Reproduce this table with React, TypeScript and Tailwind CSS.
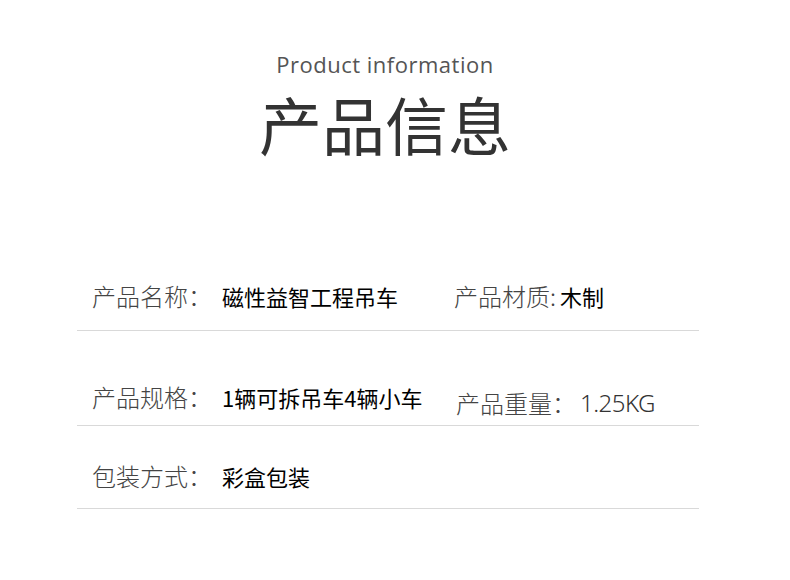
import React from "react";

interface Field {
  label: string;
  value: string;
}

const cjk = { fontFamily: '"Noto Sans CJK SC", "Noto Sans", sans-serif' };

function Label({ children }: { children: React.ReactNode }) {
  return (
    <span className="text-[24px] font-light leading-[30px] text-[#444]" style={cjk}>
      {children}
    </span>
  );
}

function Value({ children }: { children: React.ReactNode }) {
  return (
    <span className="text-[22px] font-normal leading-[30px] text-black" style={cjk}>
      {children}
    </span>
  );
}

export default function App() {
  const row1: Field[] = [
    { label: "产品名称：", value: "磁性益智工程吊车" },
    { label: "产品材质:", value: "木制" },
  ];

  return (
    <div className="w-[790px] h-[580px] bg-white overflow-hidden" style={cjk}>
      {/* Heading */}
      <div className="flex flex-col items-center pr-[20px] pt-[53px]">
        <p
          className="text-[22px] leading-[22px] tracking-[0.5px] text-[#555]"
          style={{ fontFamily: '"Open Sans", "Noto Sans", sans-serif' }}
        >
          Product information
        </p>
        <h1 className="mt-[2px] text-[63px] leading-[92px] font-normal text-[#333]">
          产品信息
        </h1>
      </div>

      {/* Spec rows */}
      <div className="ml-[77px] mt-[97px] w-[622px]">
        <div className="flex h-[65px] items-center border-b border-[#d9d9d9] pb-[4px] pl-[15px]">
          <div className="flex w-[362px] items-center">
            <Label>{row1[0].label}</Label>
            <span className="ml-[10px]" />
            <Value>{row1[0].value}</Value>
          </div>
          <div className="flex items-center">
            <Label>{row1[1].label}</Label>
            <span className="ml-[4px]" />
            <Value>{row1[1].value}</Value>
          </div>
        </div>

        <div className="flex h-[95px] items-center border-b border-[#d9d9d9] pl-[15px] pt-[37px]">
          <div className="flex w-[364px] items-center">
            <Label>产品规格：</Label>
            <span className="ml-[10px]" />
            <Value>1辆可拆吊车4辆小车</Value>
          </div>
          <div className="flex items-center pt-[12px]">
            <Label>产品重量：</Label>
            <span
              className="ml-[4px] text-[24px] font-light leading-[30px] tracking-[-0.5px] text-[#333]"
              style={{ fontFamily: '"Noto Sans", "Open Sans", sans-serif' }}
            >
              1.25KG
            </span>
          </div>
        </div>

        <div className="flex h-[83px] items-center border-b border-[#d9d9d9] pl-[15px] pt-[18px]">
          <Label>包装方式：</Label>
          <span className="ml-[10px]" />
          <Value>彩盒包装</Value>
        </div>
      </div>
    </div>
  );
}
